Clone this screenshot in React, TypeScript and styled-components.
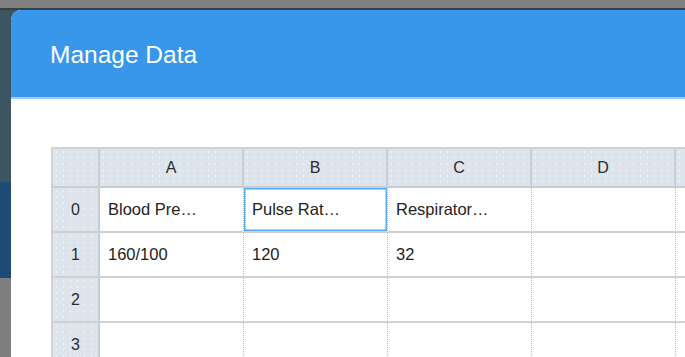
import * as React from "react";
import styled, { createGlobalStyle } from "styled-components";

const GlobalStyle = createGlobalStyle`
  html, body {
    margin: 0;
    padding: 0;
    width: 685px;
    height: 357px;
    overflow: hidden;
  }
  body {
    font-family: "Liberation Sans", Arial, sans-serif;
  }
`;

const Page = styled.div`
  width: 685px;
  height: 357px;
  overflow: hidden;
  padding: 10px 0 0 11px;
  box-sizing: border-box;
  background: linear-gradient(
    to bottom,
    #808080 0 8px,
    #2c434c 8px 10px,
    #3b5660 10px 182px,
    #1d4b74 182px 278px,
    #7f7f7f 278px
  );
`;

const Modal = styled.div`
  width: 720px;
  height: 400px;
  background: #fff;
  border-top-left-radius: 10px;
  overflow: hidden;
`;

const Header = styled.div`
  height: 87px;
  display: flex;
  align-items: center;
  padding-left: 39px;
  background: #3897ea;
  border-bottom: 2px solid #9fcdf5;
`;

const Title = styled.h1`
  margin: 0;
  padding-top: 3px;
  font-size: 24.5px;
  font-weight: normal;
  color: #fff;
`;

const Body = styled.div`
  padding: 48px 0 0 40px;
`;

const Sheet = styled.div`
  display: grid;
  grid-template-columns: 47px repeat(5, 144px);
  grid-auto-rows: 45px;
  grid-template-rows: 39px;
  border-top: 2px solid #cdd2d8;
  border-left: 2px solid #cdd2d8;
`;

const HeadCell = styled.div`
  display: flex;
  align-items: center;
  justify-content: center;
  box-sizing: border-box;
  padding-top: 1px;
  background-color: #dee4eb;
  background-image: radial-gradient(#f0f3f7 0.9px, transparent 1.1px);
  background-size: 7px 6px;
  border-right: 2px solid #c6cdd6;
  border-bottom: 2px solid #c6cdd6;
  font-size: 16px;
  color: #2b2b2b;
`;

const RowHead = styled(HeadCell)`
  font-size: 16px;
  border-bottom: 2px solid #d0d0d0;
`;

const Cell = styled.div<{ selected?: boolean }>`
  display: flex;
  align-items: center;
  box-sizing: border-box;
  padding-left: 8px;
  border-right: 1px dotted #b8b8b8;
  border-bottom: 2px solid #d0d0d0;
  font-size: 16.5px;
  color: #222;
  white-space: nowrap;
  overflow: hidden;
  ${p => p.selected && "box-shadow: inset 0 0 0 1.5px #58abf0;"}
`;

const columns = ["A", "B", "C", "D", ""];
const rows: string[][] = [
  ["Blood Pre…", "Pulse Rat…", "Respirator…", "", ""],
  ["160/100", "120", "32", "", ""],
  ["", "", "", "", ""],
  ["", "", "", "", ""],
];

const App: React.FC = () => (
  <>
    <GlobalStyle />
    <Page>
      <Modal>
        <Header>
          <Title>Manage Data</Title>
        </Header>
        <Body>
          <Sheet>
            <HeadCell />
            {columns.map((c, i) => (
              <HeadCell key={i}>{c}</HeadCell>
            ))}
            {rows.map((r, ri) => (
              <React.Fragment key={ri}>
                <RowHead>{ri}</RowHead>
                {r.map((v, ci) => (
                  <Cell key={ci} selected={ri === 0 && ci === 1}>
                    {v}
                  </Cell>
                ))}
              </React.Fragment>
            ))}
          </Sheet>
        </Body>
      </Modal>
    </Page>
  </>
);

export default App;
